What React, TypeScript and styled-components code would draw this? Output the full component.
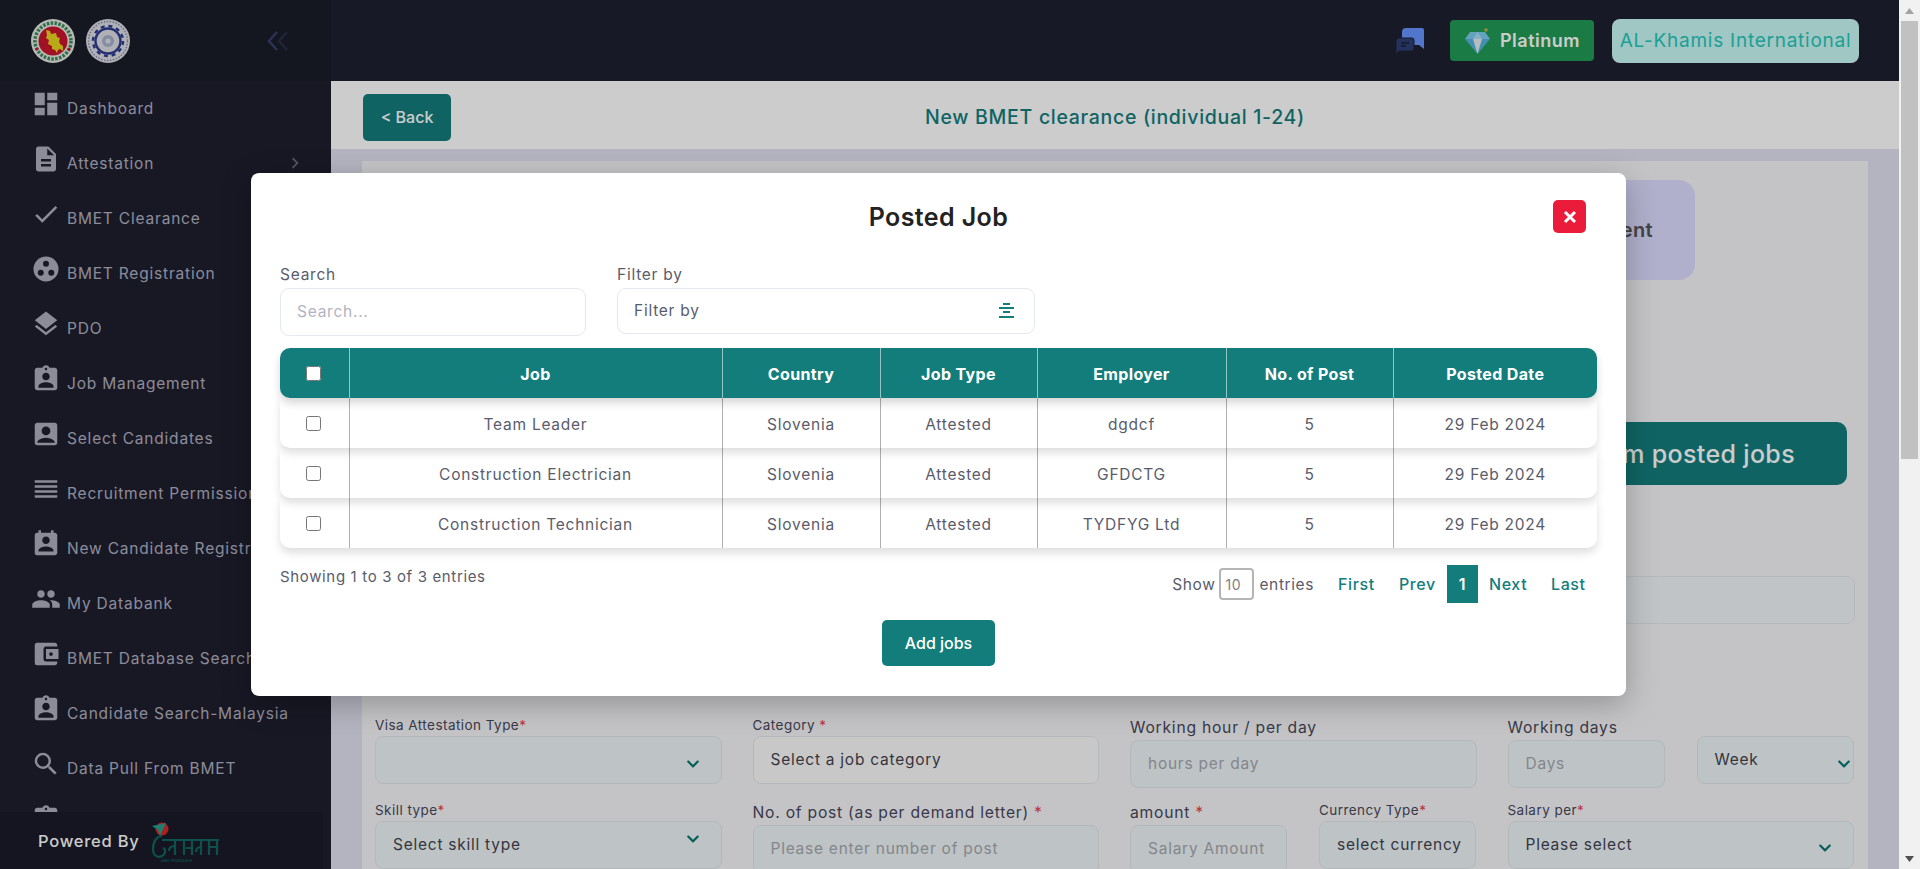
import React from 'react';
import styled, { createGlobalStyle } from 'styled-components';
import { FaChevronDown } from 'react-icons/fa';
import {
  MdDashboard,
  MdDescription,
  MdCheck,
  MdLayers,
  MdAssignmentInd,
  MdAccountBox,
  MdReorder,
  MdPermContactCalendar,
  MdPeople,
  MdAccountBalanceWallet,
  MdSearch,
  MdChevronRight,
} from 'react-icons/md';

const TEAL = '#137d7c';

const GlobalStyle = createGlobalStyle`
  html, body {
    margin: 0;
    padding: 0;
    height: 100%;
    overflow: hidden;
    font-family: Inter, "Noto Sans", sans-serif;
    letter-spacing: 0.75px;
  }
  * { box-sizing: border-box; }
`;

const Shell = styled.div`
  display: flex;
  height: 869px;
  overflow: hidden;
`;

const Page = styled.div`
  position: relative;
  flex: 1;
  min-width: 0;
  display: flex;
  overflow: hidden;
`;

/* Sidebar */
const Sidebar = styled.aside`
  width: 331px;
  flex: none;
  display: flex;
  flex-direction: column;
  background: #1e1f2f;
`;

const SidebarTop = styled.div`
  height: 81px;
  flex: none;
  display: flex;
  align-items: center;
  padding: 0 43px 0 31px;
  gap: 11px;
  background: #1a1c28;
`;

const CollapseBtn = styled.div`
  margin-left: auto;
  display: flex;
`;

const Nav = styled.nav`
  flex: 1;
  min-height: 0;
  overflow: hidden;
`;

const NavRow = styled.div`
  position: relative;
  height: 55px;
  display: flex;
  align-items: center;
  padding-left: 31px;
  gap: 6px;
  color: #b0b0c0;
  font-size: 15.5px;
  letter-spacing: 0.8px;
  white-space: nowrap;

  svg.nav-icon {
    flex: none;
    margin-bottom: 10px;
  }
`;

const NavArrow = styled.span`
  position: absolute;
  left: 284px;
  top: 16px;
  display: flex;
  color: #6a6a78;
`;

const PoweredBy = styled.div`
  height: 57px;
  width: 323px;
  flex: none;
  display: flex;
  align-items: center;
  padding-left: 38px;
  gap: 12px;
  background: #1a1b28;
  color: #fff;
  font-size: 16.5px;
  font-weight: 500;
`;

/* Main column */
const Main = styled.main`
  flex: 1;
  min-width: 0;
  display: flex;
  flex-direction: column;
  background: #e2e2f0;
`;

const Topbar = styled.header`
  height: 81px;
  flex: none;
  display: flex;
  align-items: center;
  justify-content: flex-end;
  padding-right: 40px;
  background: #1e2030;
`;

const PlanBadge = styled.div`
  width: 144px;
  height: 41px;
  margin: 0 18px 0 26px;
  display: flex;
  align-items: center;
  gap: 10px;
  padding-left: 15px;
  border-radius: 4px;
  background: #219c55;
  color: #fff;
  font-size: 18px;
  font-weight: 600;
  letter-spacing: 0.5px;
`;

const CompanyBadge = styled.div`
  width: 247px;
  height: 44px;
  display: flex;
  align-items: center;
  justify-content: center;
  border-radius: 8px;
  background: #c9f9f4;
  color: #23c8bb;
  font-size: 19px;
  white-space: nowrap;
`;

const PageHead = styled.div`
  height: 68px;
  flex: none;
  display: flex;
  align-items: center;
  padding: 4px 0 0 32px;
  background: #fff;
`;

const BackButton = styled.button`
  width: 88px;
  height: 47px;
  border: 0;
  border-radius: 5px;
  background: ${TEAL};
  color: #fff;
  font: inherit;
  font-size: 16px;
  font-weight: 500;
`;

const PageTitle = styled.h1`
  margin: 0 0 0 409px;
  width: 510px;
  text-align: center;
  font-size: 19.5px;
  font-weight: 500;
  letter-spacing: 0.7px;
  color: ${TEAL};
  white-space: nowrap;
`;

const Content = styled.div`
  flex: 1;
  min-height: 0;
  padding: 12px 31px 0;
`;

const Card = styled.div`
  height: 100%;
  padding: 19px 13px 0;
  background: #f6f6f9;
`;

const TileRow = styled.div`
  display: flex;
  justify-content: flex-end;
  padding-right: 160px;
`;

const Tile = styled.div`
  width: 260px;
  height: 100px;
  display: flex;
  align-items: center;
  justify-content: flex-end;
  padding-right: 42px;
  border-radius: 16px;
  background: #dcdcff;
  color: #555;
  font-size: 20px;
  font-weight: 600;
  letter-spacing: 0.35px;
`;

const PostedRow = styled.div`
  display: flex;
  justify-content: flex-end;
  margin: 142px 8px 0 0;
`;

const PostedButton = styled.div`
  width: 470px;
  height: 63px;
  display: flex;
  align-items: center;
  justify-content: flex-end;
  padding-right: 52px;
  border-radius: 10px;
  background: ${TEAL};
  color: #fff;
  font-size: 25px;
  font-weight: 500;
  letter-spacing: 0.35px;
`;

const WideInput = styled.div`
  height: 48px;
  margin-top: 91px;
  border: 1px solid #e2e7ea;
  border-radius: 8px;
  background: #f2f6f8;
`;

const FormGrid = styled.div`
  display: grid;
  grid-template-columns: repeat(4, 346.5px);
  column-gap: 31px;
  row-gap: 11px;
  margin-top: 90px;
`;

const SplitCell = styled.div`
  display: grid;
  grid-template-columns: 157px 157px;
  column-gap: 32px;
  align-items: start;
`;

const Cell = styled.div`
  min-width: 0;
`;

const SmallLabel = styled.div`
  height: 22px;
  line-height: 22px;
  font-size: 13.5px;
  letter-spacing: 0.45px;
  color: #48485a;
  white-space: nowrap;
`;

const BigLabel = styled.div`
  height: 26px;
  padding-top: 1px;
  line-height: 26px;
  font-size: 15.7px;
  color: #48485a;
  white-space: nowrap;
`;

const Req = styled.span`
  color: #e8414f;
`;

const FieldBox = styled.div<{ $plain?: boolean }>`
  position: relative;
  height: 48px;
  display: flex;
  align-items: center;
  padding: 0 0 2px 17px;
  border: 1px solid #e0e6e9;
  border-radius: 8px;
  background: ${(p) => (p.$plain ? '#fbfbfb' : '#eef5f7')};
  color: #43434f;
  font-size: 15.5px;
  white-space: nowrap;
  overflow: hidden;
`;

const Placeholder = styled.span`
  color: #a6a8ae;
`;

const FieldChevron = styled(FaChevronDown)<{ $top: number; $right: number }>`
  position: absolute;
  top: ${(p) => p.$top}px;
  right: ${(p) => p.$right}px;
  width: 14px;
  height: 14px;
  color: #08776e;
`;

/* Scrollbar */
const ScrollTrack = styled.div`
  width: 21px;
  flex: none;
  display: flex;
  flex-direction: column;
  align-items: center;
  padding: 0 2px;
  background: #f1f1f1;
`;

const ScrollArrow = styled.div`
  height: 21px;
  flex: none;
  display: flex;
  align-items: center;
  justify-content: center;
`;

const ScrollThumb = styled.div`
  width: 100%;
  height: 438px;
  flex: none;
  background: #c1c1c1;
`;

const ScrollGap = styled.div`
  flex: 1;
`;

/* Modal */
const Overlay = styled.div`
  position: absolute;
  inset: 0;
  background: rgba(0, 0, 0, 0.2);
`;

const Modal = styled.section`
  width: 1375px;
  height: 523px;
  margin: 173px 0 0 251px;
  padding: 0 29px;
  border-radius: 8px;
  background: #fff;
  box-shadow: 0 8px 30px rgba(0, 0, 0, 0.25);
`;

const ModalHead = styled.div`
  position: relative;
  height: 90px;
  display: flex;
  align-items: center;
  justify-content: center;
  padding-bottom: 2px;
`;

const ModalTitle = styled.h2`
  margin: 0;
  font-size: 25px;
  font-weight: 600;
  color: #222;
  letter-spacing: 0.4px;
`;

const CloseButton = styled.button`
  position: absolute;
  top: 27px;
  right: 11px;
  width: 33px;
  height: 33px;
  display: flex;
  align-items: center;
  justify-content: center;
  padding: 0;
  border: 0;
  border-radius: 5px;
  background: #ea1c39;
`;

const FilterRow = styled.div`
  display: flex;
  gap: 31px;
  height: 85px;
`;

const FilterCol = styled.div<{ $w: number }>`
  width: ${(p) => p.$w}px;
`;

const FilterLabel = styled.div`
  height: 25px;
  line-height: 24px;
  font-size: 15.5px;
  color: #5a5c6b;
`;

const FilterBox = styled.div<{ $h: number; $muted?: boolean }>`
  height: ${(p) => p.$h}px;
  display: flex;
  align-items: center;
  justify-content: space-between;
  padding: 0 20px 1px 16px;
  border: 1px solid #e4e9ef;
  border-radius: 9px;
  font-size: 15.5px;
  color: ${(p) => (p.$muted ? '#b3b3c3' : '#5a5c6b')};
`;

const TableWrap = styled.div`
  width: 1317px;
`;

const GRID_COLS = '69.5px 373px 158px 157px 189px 167px 203.5px';

const HeadRow = styled.div`
  position: relative;
  z-index: 5;
  height: 50px;
  display: grid;
  grid-template-columns: ${GRID_COLS};
  border-radius: 10px;
  background: ${TEAL};
  box-shadow: 0 5px 9px rgba(0, 0, 0, 0.16);
  color: #fff;
  font-size: 16px;
  font-weight: 700;
  letter-spacing: 0.35px;
`;

const BodyRow = styled.div<{ $layer: number }>`
  position: relative;
  z-index: ${(p) => p.$layer};
  height: 50px;
  display: grid;
  grid-template-columns: ${GRID_COLS};
  border-radius: 0 0 10px 10px;
  background: #fff;
  box-shadow: 0 5px 9px rgba(0, 0, 0, 0.13);
  color: #5a5c6b;
  font-size: 15.5px;
`;

const TableCell = styled.div<{ $line: string }>`
  display: flex;
  align-items: center;
  justify-content: center;
  padding-top: 2px;
  border-right: 1px solid ${(p) => p.$line};
  white-space: nowrap;

  &:last-child {
    border-right: 0;
  }
`;

const RowCheck = styled.input`
  width: 15px;
  height: 15px;
  margin: 0 2px 2px 0;
`;

const TableFoot = styled.div`
  display: flex;
  justify-content: space-between;
  align-items: flex-start;
  width: 1317px;
`;

const ShowingText = styled.div`
  margin-top: 19px;
  font-size: 15px;
  letter-spacing: 0.65px;
  color: #5a5c6b;
`;

const Pager = styled.div`
  display: flex;
  align-items: center;
  margin-top: 17px;
  color: #5a5c6b;
`;

const PagerInfo = styled.div`
  display: flex;
  align-items: center;
  margin-right: 24px;
  font-size: 15.5px;
  letter-spacing: 0.6px;
`;

const PageSize = styled.div`
  width: 35px;
  height: 32px;
  margin: 0 5px 0 4px;
  padding-left: 4px;
  display: flex;
  align-items: center;
  border: 2px solid #b5b5b5;
  border-radius: 4px;
  font-size: 14px;
  color: #808080;
`;

const PageLink = styled.span<{ $w: number }>`
  width: ${(p) => p.$w}px;
  font-size: 16px;
  font-weight: 500;
  letter-spacing: 0.6px;
  color: ${TEAL};
`;

const PageCurrent = styled.span`
  width: 31px;
  height: 38px;
  margin-right: 11px;
  display: flex;
  align-items: center;
  justify-content: center;
  background: ${TEAL};
  color: #fff;
  font-weight: 600;
  font-size: 16px;
`;

const ModalActions = styled.div`
  display: flex;
  justify-content: center;
  margin-top: 17px;
`;

const AddButton = styled.button`
  width: 113px;
  height: 46px;
  border: 0;
  border-radius: 5px;
  background: ${TEAL};
  color: #fff;
  font: inherit;
  font-size: 16px;
  font-weight: 500;
`;

/* Drawn logos and icons */
const GovLogo = () => (
  <svg width="44" height="44" viewBox="0 0 44 44">
    <circle cx="22" cy="22" r="22" fill="#e4e8e2" />
    <circle cx="22" cy="22" r="18" fill="none" stroke="#3e8a5c" strokeWidth="3.5" strokeDasharray="2.5 1.4" />
    <circle cx="22" cy="22" r="14.5" fill="#c9162e" />
    <path
      d="M15 11l4 1 1 3 5-1 1 4 3 1-1 3 1 3 3 2 0 5-3-2-2 1-1 3-2-3-3-1 0-3-4-2 1-4-3-2 1-3z"
      fill="#e9d41e"
    />
    <circle cx="6" cy="30" r="1.6" fill="#c9162e" />
    <circle cx="38" cy="30" r="1.6" fill="#c9162e" />
  </svg>
);

const BmetLogo = () => (
  <svg width="44" height="44" viewBox="0 0 44 44">
    <circle cx="22" cy="22" r="22" fill="#dcdde3" />
    <circle cx="22" cy="22" r="19.5" fill="none" stroke="#7f88b5" strokeWidth="1.4" strokeDasharray="1.5 1.5" />
    <circle cx="22" cy="22" r="15" fill="none" stroke="#2c3b90" strokeWidth="2.4" strokeDasharray="4 3.85" />
    <circle cx="22" cy="22" r="12.5" fill="none" stroke="#2c3b90" strokeWidth="2.4" />
    <circle cx="22" cy="22" r="6" fill="#a6aecf" />
    <circle cx="22" cy="22" r="2.6" fill="#dcdde3" />
  </svg>
);

const CollapseIcon = () => (
  <svg width="21" height="20" viewBox="0 0 21 20" fill="none" strokeWidth="2.4">
    <path d="M10 1L2 10l8 9" stroke="#3a3e6e" />
    <path d="M20 1l-8 9 8 9" stroke="#2b2d4c" />
  </svg>
);

const WorkspaceIcon = () => (
  <svg className="nav-icon" width="30" height="30" viewBox="0 0 24 24">
    <circle cx="12" cy="12" r="10" fill="currentColor" />
    <circle cx="12" cy="7.8" r="2.4" fill="#1e1f2f" />
    <circle cx="7.8" cy="15" r="2.4" fill="#1e1f2f" />
    <circle cx="16.2" cy="15" r="2.4" fill="#1e1f2f" />
  </svg>
);

const ProbashiLogo = () => (
  <svg width="70" height="44" viewBox="0 0 70 44" fill="none">
    <circle cx="11" cy="10" r="6.5" fill="#d62a2a" />
    <path d="M1 7l14-3-6 13-2-6z" fill="#2a9d8b" />
    <path
      d="M2 30c0-8 4-13 9-13M2 30c0 7 5 9 9 7 4-2 4-7 1-8M11 21h57M24 21v15M24 27c-4 0-6 2-6 5M33 21v15M41 21v15M41 29h-6M50 21v15M50 28c-3 0-5 2-5 5M58 21v15M66 21v15M58 28h8"
      stroke="#11645f"
      strokeWidth="2.2"
    />
    <text x="10" y="43" fontSize="4" fill="#11645f" letterSpacing="0.2">
      AMI PROBASHI
    </text>
  </svg>
);

const ChatIcon = () => (
  <svg width="28" height="26" viewBox="0 0 28 26">
    <path d="M10 0h16a2 2 0 0 1 2 2v19l-5-4H6V4a4 4 0 0 1 4-4z" fill="#6794ff" />
    <path d="M3 10h13a2 2 0 0 1 2 2v9a2 2 0 0 1-2 2H3l-3 3V13a3 3 0 0 1 3-3z" fill="#2e3f76" stroke="#1e2030" strokeWidth="1" />
    <path d="M5 15h8M5 18h5" stroke="#1e2030" strokeWidth="1.4" />
  </svg>
);

const DiamondIcon = () => (
  <svg width="25" height="26" viewBox="0 0 25 26">
    <path d="M5 4h15l5 7H0z" fill="#7ecbed" />
    <path d="M0 11h25L12.5 26z" fill="#54b3de" />
    <path d="M8 11h9l-4.5 15z" fill="#e6ecef" />
    <path d="M8 11l4.5-7 4.5 7z" fill="#a9e0f5" />
    <path d="M21 0v4M19 2h4" stroke="#e6b84a" strokeWidth="1" />
  </svg>
);

const FilterIcon = () => (
  <svg width="15" height="15" viewBox="0 0 15 15" fill={TEAL}>
    <rect x="4" y="0" width="7" height="2" />
    <rect x="0" y="4" width="15" height="2" />
    <rect x="4" y="8" width="7" height="2" />
    <rect x="0" y="13" width="15" height="2" />
  </svg>
);

const CloseIcon = () => (
  <svg width="14" height="14" viewBox="0 0 14 14" fill="none">
    <path d="M2 2l10 10M12 2L2 12" stroke="#fff" strokeWidth="3" />
  </svg>
);

const navItems: { label: string; icon: React.ReactNode; arrow?: boolean }[] = [
  { label: 'Dashboard', icon: <MdDashboard className="nav-icon" size={30} /> },
  { label: 'Attestation', icon: <MdDescription className="nav-icon" size={30} />, arrow: true },
  { label: 'BMET Clearance', icon: <MdCheck className="nav-icon" size={30} /> },
  { label: 'BMET Registration', icon: <WorkspaceIcon /> },
  { label: 'PDO', icon: <MdLayers className="nav-icon" size={30} /> },
  { label: 'Job Management', icon: <MdAssignmentInd className="nav-icon" size={30} /> },
  { label: 'Select Candidates', icon: <MdAccountBox className="nav-icon" size={30} /> },
  { label: 'Recruitment Permission', icon: <MdReorder className="nav-icon" size={30} /> },
  { label: 'New Candidate Registration', icon: <MdPermContactCalendar className="nav-icon" size={30} /> },
  { label: 'My Databank', icon: <MdPeople className="nav-icon" size={30} /> },
  { label: 'BMET Database Search', icon: <MdAccountBalanceWallet className="nav-icon" size={30} /> },
  { label: 'Candidate Search-Malaysia', icon: <MdAssignmentInd className="nav-icon" size={30} /> },
  { label: 'Data Pull From BMET', icon: <MdSearch className="nav-icon" size={30} /> },
  { label: '', icon: <MdAssignmentInd className="nav-icon" size={30} /> },
];

const jobs = [
  { job: 'Team Leader', employer: 'dgdcf' },
  { job: 'Construction Electrician', employer: 'GFDCTG' },
  { job: 'Construction Technician', employer: 'TYDFYG Ltd' },
];

const HEAD_LINE = 'rgba(255,255,255,0.55)';
const BODY_LINE = '#b0b0b0';

export default function App() {
  return (
    <>
      <GlobalStyle />
      <Shell>
        <Page>
          <Sidebar>
            <SidebarTop>
              <GovLogo />
              <BmetLogo />
              <CollapseBtn>
                <CollapseIcon />
              </CollapseBtn>
            </SidebarTop>
            <Nav>
              {navItems.map((item) => (
                <NavRow key={item.label}>
                  {item.icon}
                  {item.label}
                  {item.arrow && (
                    <NavArrow>
                      <MdChevronRight size={22} />
                    </NavArrow>
                  )}
                </NavRow>
              ))}
            </Nav>
            <PoweredBy>
              Powered By
              <ProbashiLogo />
            </PoweredBy>
          </Sidebar>

          <Main>
            <Topbar>
              <ChatIcon />
              <PlanBadge>
                <DiamondIcon />
                Platinum
              </PlanBadge>
              <CompanyBadge>AL-Khamis International</CompanyBadge>
            </Topbar>
            <PageHead>
              <BackButton>&lt; Back</BackButton>
              <PageTitle>New BMET clearance (individual 1-24)</PageTitle>
            </PageHead>
            <Content>
              <Card>
                <TileRow>
                  <Tile>Recruitment</Tile>
                </TileRow>
                <PostedRow>
                  <PostedButton>Select from posted jobs</PostedButton>
                </PostedRow>
                <WideInput />
                <FormGrid>
                  <Cell>
                    <SmallLabel>
                      Visa Attestation Type<Req>*</Req>
                    </SmallLabel>
                    <FieldBox>
                      <FieldChevron $top={20} $right={21} />
                    </FieldBox>
                  </Cell>
                  <Cell>
                    <SmallLabel>
                      Category <Req>*</Req>
                    </SmallLabel>
                    <FieldBox $plain>Select a job category</FieldBox>
                  </Cell>
                  <Cell>
                    <BigLabel>Working hour / per day</BigLabel>
                    <FieldBox>
                      <Placeholder>hours per day</Placeholder>
                    </FieldBox>
                  </Cell>
                  <SplitCell>
                    <Cell>
                      <BigLabel>Working days</BigLabel>
                      <FieldBox>
                        <Placeholder>Days</Placeholder>
                      </FieldBox>
                    </Cell>
                    <Cell>
                      <SmallLabel>&nbsp;</SmallLabel>
                      <FieldBox>
                        Week
                        <FieldChevron $top={20} $right={2} />
                      </FieldBox>
                    </Cell>
                  </SplitCell>

                  <Cell>
                    <SmallLabel>
                      Skill type<Req>*</Req>
                    </SmallLabel>
                    <FieldBox>
                      Select skill type
                      <FieldChevron $top={10} $right={21} />
                    </FieldBox>
                  </Cell>
                  <Cell>
                    <BigLabel>
                      No. of post (as per demand letter) <Req>*</Req>
                    </BigLabel>
                    <FieldBox>
                      <Placeholder>Please enter number of post</Placeholder>
                    </FieldBox>
                  </Cell>
                  <SplitCell>
                    <Cell>
                      <BigLabel>
                        amount <Req>*</Req>
                      </BigLabel>
                      <FieldBox>
                        <Placeholder>Salary Amount</Placeholder>
                      </FieldBox>
                    </Cell>
                    <Cell>
                      <SmallLabel>
                        Currency Type<Req>*</Req>
                      </SmallLabel>
                      <FieldBox>select currency</FieldBox>
                    </Cell>
                  </SplitCell>
                  <Cell>
                    <SmallLabel>
                      Salary per<Req>*</Req>
                    </SmallLabel>
                    <FieldBox>
                      Please select
                      <FieldChevron $top={19} $right={21} />
                    </FieldBox>
                  </Cell>
                </FormGrid>
              </Card>
            </Content>
          </Main>

          <Overlay>
            <Modal>
              <ModalHead>
                <ModalTitle>Posted Job</ModalTitle>
                <CloseButton>
                  <CloseIcon />
                </CloseButton>
              </ModalHead>
              <FilterRow>
                <FilterCol $w={306}>
                  <FilterLabel>Search</FilterLabel>
                  <FilterBox $h={48} $muted>
                    Search...
                  </FilterBox>
                </FilterCol>
                <FilterCol $w={418}>
                  <FilterLabel>Filter by</FilterLabel>
                  <FilterBox $h={46}>
                    Filter by
                    <FilterIcon />
                  </FilterBox>
                </FilterCol>
              </FilterRow>
              <TableWrap>
                <HeadRow>
                  <TableCell $line={HEAD_LINE}>
                    <RowCheck type="checkbox" />
                  </TableCell>
                  {['Job', 'Country', 'Job Type', 'Employer', 'No. of Post', 'Posted Date'].map((h) => (
                    <TableCell key={h} $line={HEAD_LINE}>
                      {h}
                    </TableCell>
                  ))}
                </HeadRow>
                {jobs.map((row, i) => (
                  <BodyRow key={row.job} $layer={4 - i}>
                    <TableCell $line={BODY_LINE}>
                      <RowCheck type="checkbox" />
                    </TableCell>
                    <TableCell $line={BODY_LINE}>{row.job}</TableCell>
                    <TableCell $line={BODY_LINE}>Slovenia</TableCell>
                    <TableCell $line={BODY_LINE}>Attested</TableCell>
                    <TableCell $line={BODY_LINE}>{row.employer}</TableCell>
                    <TableCell $line={BODY_LINE}>5</TableCell>
                    <TableCell $line={BODY_LINE}>29 Feb 2024</TableCell>
                  </BodyRow>
                ))}
              </TableWrap>
              <TableFoot>
                <ShowingText>Showing 1 to 3 of 3 entries</ShowingText>
                <Pager>
                  <PagerInfo>
                    Show
                    <PageSize>10</PageSize>
                    entries
                  </PagerInfo>
                  <PageLink $w={61}>First</PageLink>
                  <PageLink $w={48}>Prev</PageLink>
                  <PageCurrent>1</PageCurrent>
                  <PageLink $w={62}>Next</PageLink>
                  <PageLink $w={46}>Last</PageLink>
                </Pager>
              </TableFoot>
              <ModalActions>
                <AddButton>Add jobs</AddButton>
              </ModalActions>
            </Modal>
          </Overlay>
        </Page>

        <ScrollTrack>
          <ScrollArrow>
            <svg width="9" height="6" viewBox="0 0 9 6">
              <path d="M4.5 0L9 6H0z" fill="#a3a3a3" />
            </svg>
          </ScrollArrow>
          <ScrollThumb />
          <ScrollGap />
          <ScrollArrow>
            <svg width="9" height="6" viewBox="0 0 9 6">
              <path d="M4.5 6L0 0h9z" fill="#505050" />
            </svg>
          </ScrollArrow>
        </ScrollTrack>
      </Shell>
    </>
  );
}
